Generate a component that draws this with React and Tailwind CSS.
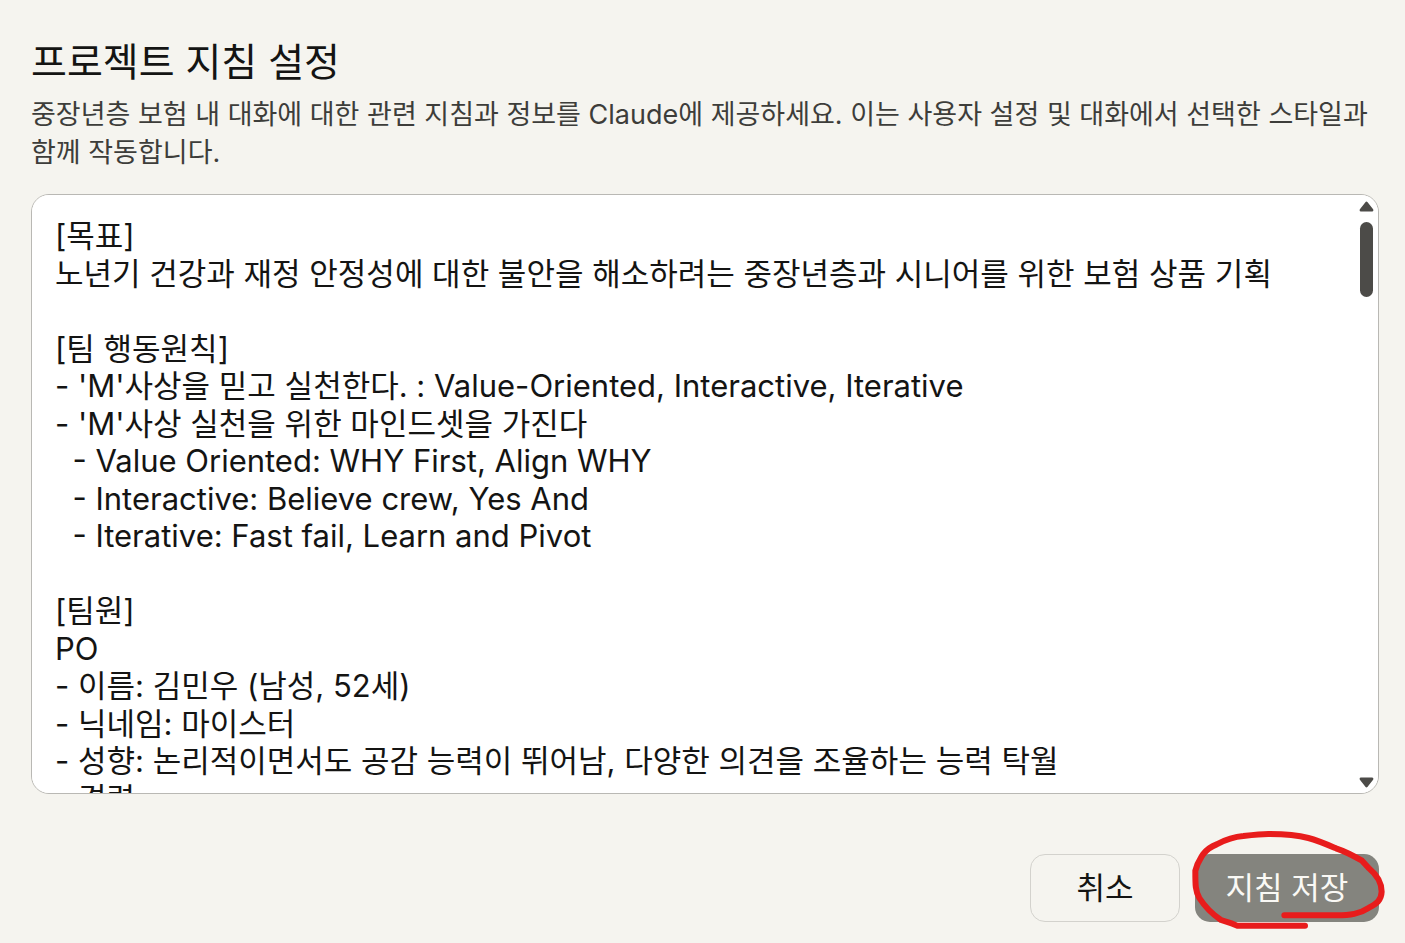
const instructions = `[목표]
노년기 건강과 재정 안정성에 대한 불안을 해소하려는 중장년층과 시니어를 위한 보험 상품 기획

[팀 행동원칙]
- 'M'사상을 믿고 실천한다. : Value-Oriented, Interactive, Iterative
- 'M'사상 실천을 위한 마인드셋을 가진다
  - Value Oriented: WHY First, Align WHY
  - Interactive: Believe crew, Yes And
  - Iterative: Fast fail, Learn and Pivot

[팀원]
PO
- 이름: 김민우 (남성, 52세)
- 닉네임: 마이스터
- 성향: 논리적이면서도 공감 능력이 뛰어남, 다양한 의견을 조율하는 능력 탁월
- 경력`;

function ScrollRail() {
  return (
    <div
      aria-hidden="true"
      className="pointer-events-none absolute inset-y-0 right-1 flex w-[17px] flex-col items-center pt-[7px] pb-[6px]"
    >
      <svg className="h-[11px] w-[15px] shrink-0" viewBox="0 0 15 11">
        <path d="M7.5 2 13 9.2H2Z" fill="#4c4b48" stroke="#4c4b48" strokeWidth="2.8" strokeLinejoin="round" />
      </svg>
      <div className="mt-[10px] h-[75px] w-[13px] shrink-0 rounded-full bg-[#4c4b48]" />
      <svg className="mt-auto h-[11px] w-[15px] shrink-0" viewBox="0 0 15 11">
        <path d="M7.5 9 13 1.8H2Z" fill="#4c4b48" stroke="#4c4b48" strokeWidth="2.8" strokeLinejoin="round" />
      </svg>
    </div>
  );
}

function HandDrawnCircle() {
  return (
    <svg
      aria-hidden="true"
      className="pointer-events-none absolute -left-[10px] -top-[29px] h-[110px] w-[205px] max-w-none"
      viewBox="555 45 615 330"
      fill="none"
      stroke="#e81c1c"
      strokeWidth="18"
      strokeLinecap="round"
      strokeLinejoin="round"
    >
      <path d="M915 347H712L697 341 663 330C635 311 614 289 598 264 586 243 586 226 586 182 592 158 600 148 609 133 622 116 634 109 650 103 682 86 701 80 730 78 765 74 785 72 805 72 860 72 890 75 925 84 955 92 980 103 1008 115 1038 125 1062 138 1086 152L1106 174C1130 194 1145 218 1145 245 1144 270 1131 280 1107 293 1078 312 1050 316 1010 316H853" />
    </svg>
  );
}

export default function App() {
  return (
    <main className="min-h-screen bg-[#f5f4ef] pt-[38px] pr-[26px] pb-[21px] pl-[31px] font-['Inter','Noto_Sans_CJK_KR',sans-serif] text-[#141413]">
      <h1 className="text-[39px] leading-[48px]">
        <label htmlFor="instructions">프로젝트 지침 설정</label>
      </h1>
      <p id="description" className="mt-[10px] text-[27px] leading-[38px] text-[#3d3d3a]">
        중장년층 보험 내 대화에 대한 관련 지침과 정보를 Claude에 제공하세요. 이는 사용자 설정 및 대화에서 선택한 스타일과 함께 작동합니다.
      </p>
      <form className="mt-[22px]" onSubmit={(e) => e.preventDefault()}>
        <div className="relative">
          <textarea
            id="instructions"
            aria-describedby="description"
            defaultValue={instructions}
            spellCheck={false}
            className="block h-[600px] w-full resize-none rounded-[18px] border border-[#b9b8b4] bg-white pt-[22px] pr-[40px] pl-[23px] text-[31px] leading-[1.21] outline-none [scrollbar-width:none]"
          />
          <ScrollRail />
        </div>
        <div className="mt-[60px] flex items-start justify-end gap-[15px] text-[31px] leading-[38px]">
          <button type="button" className="min-w-[150px] rounded-[15px] border border-[#d3d2cd] px-8 py-[14px]">
            취소
          </button>
          <div className="relative">
            <button type="submit" className="min-w-[184px] rounded-[15px] bg-[#84847e] px-[30px] py-[15px] text-[#faf9f5]">
              지침 저장
            </button>
            <HandDrawnCircle />
          </div>
        </div>
      </form>
    </main>
  );
}
